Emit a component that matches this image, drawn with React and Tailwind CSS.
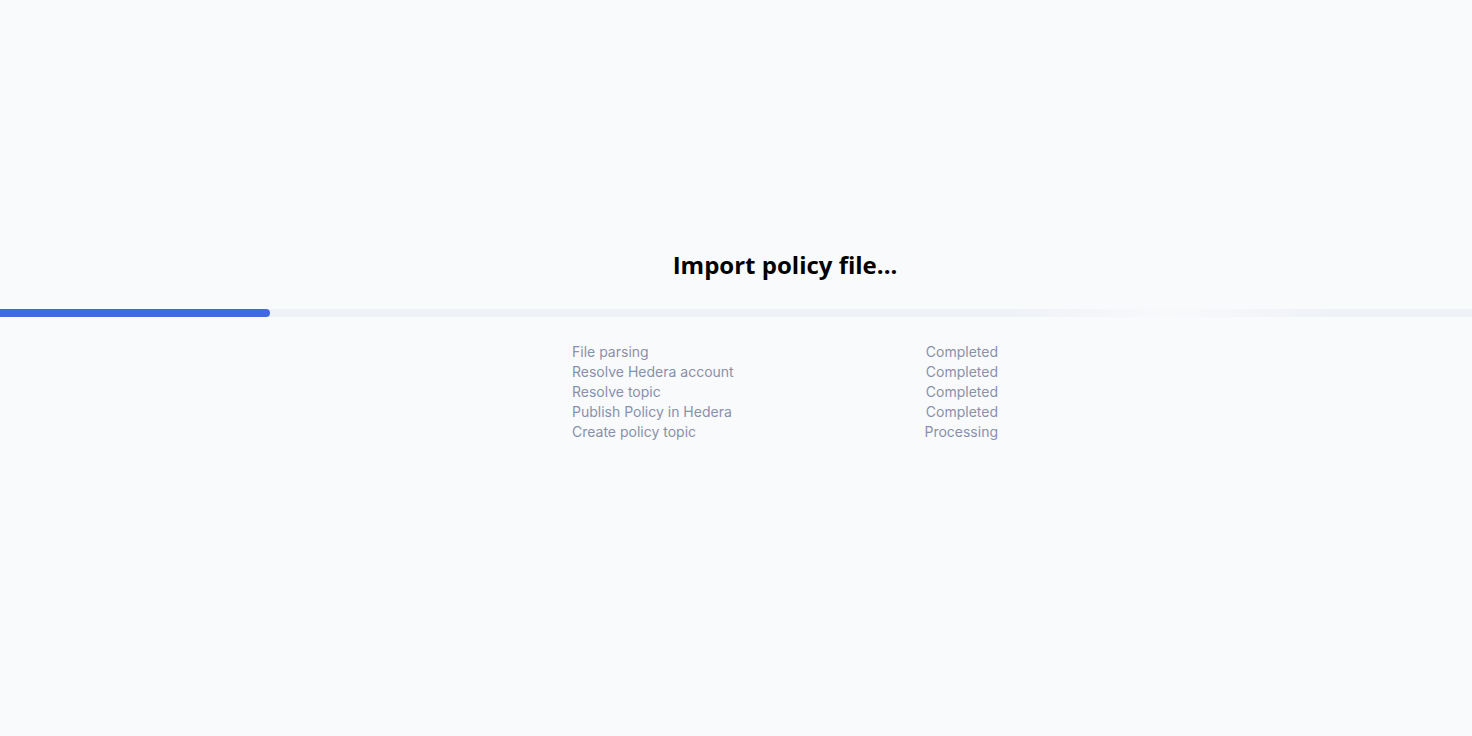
export default function App() {
  const rows = [
    ["File parsing", "Completed"],
    ["Resolve Hedera account", "Completed"],
    ["Resolve topic", "Completed"],
    ["Publish Policy in Hedera", "Completed"],
    ["Create policy topic", "Processing"],
  ];
  return (
    <div className="w-full h-[736px] bg-[#f9fafc] flex flex-col" style={{ fontFamily: "Inter, 'Noto Sans', sans-serif" }}>
      <div className="h-[250px]" />
      <div className="flex justify-center pl-[98px]">
        <h1 className="text-[24px] leading-[30px] text-black" style={{ fontFamily: "'Open Sans', Inter, sans-serif", fontWeight: 700 }}>
          Import policy file...
        </h1>
      </div>
      <div className="h-[29px]" />
      <div className="relative w-full h-[8px] bg-[#eef1f6]">
        <div className="absolute inset-y-0 left-[1000px] w-[340px] bg-[linear-gradient(90deg,rgba(249,250,252,0)_0%,rgba(249,250,252,0.9)_50%,rgba(249,250,252,0)_100%)]" />
        <div className="absolute inset-y-0 left-0 w-[270px] bg-[#4169e1] rounded-r-full" />
      </div>
      <div className="h-[25px]" />
      <div className="flex justify-center pl-[98px]">
        <div className="w-[426px] flex flex-col text-[14px] leading-[20px] text-[#8891ab]">
          {rows.map(([a, b]) => (
            <div key={a} className="flex justify-between">
              <span>{a}</span>
              <span>{b}</span>
            </div>
          ))}
        </div>
      </div>
    </div>
  );
}
